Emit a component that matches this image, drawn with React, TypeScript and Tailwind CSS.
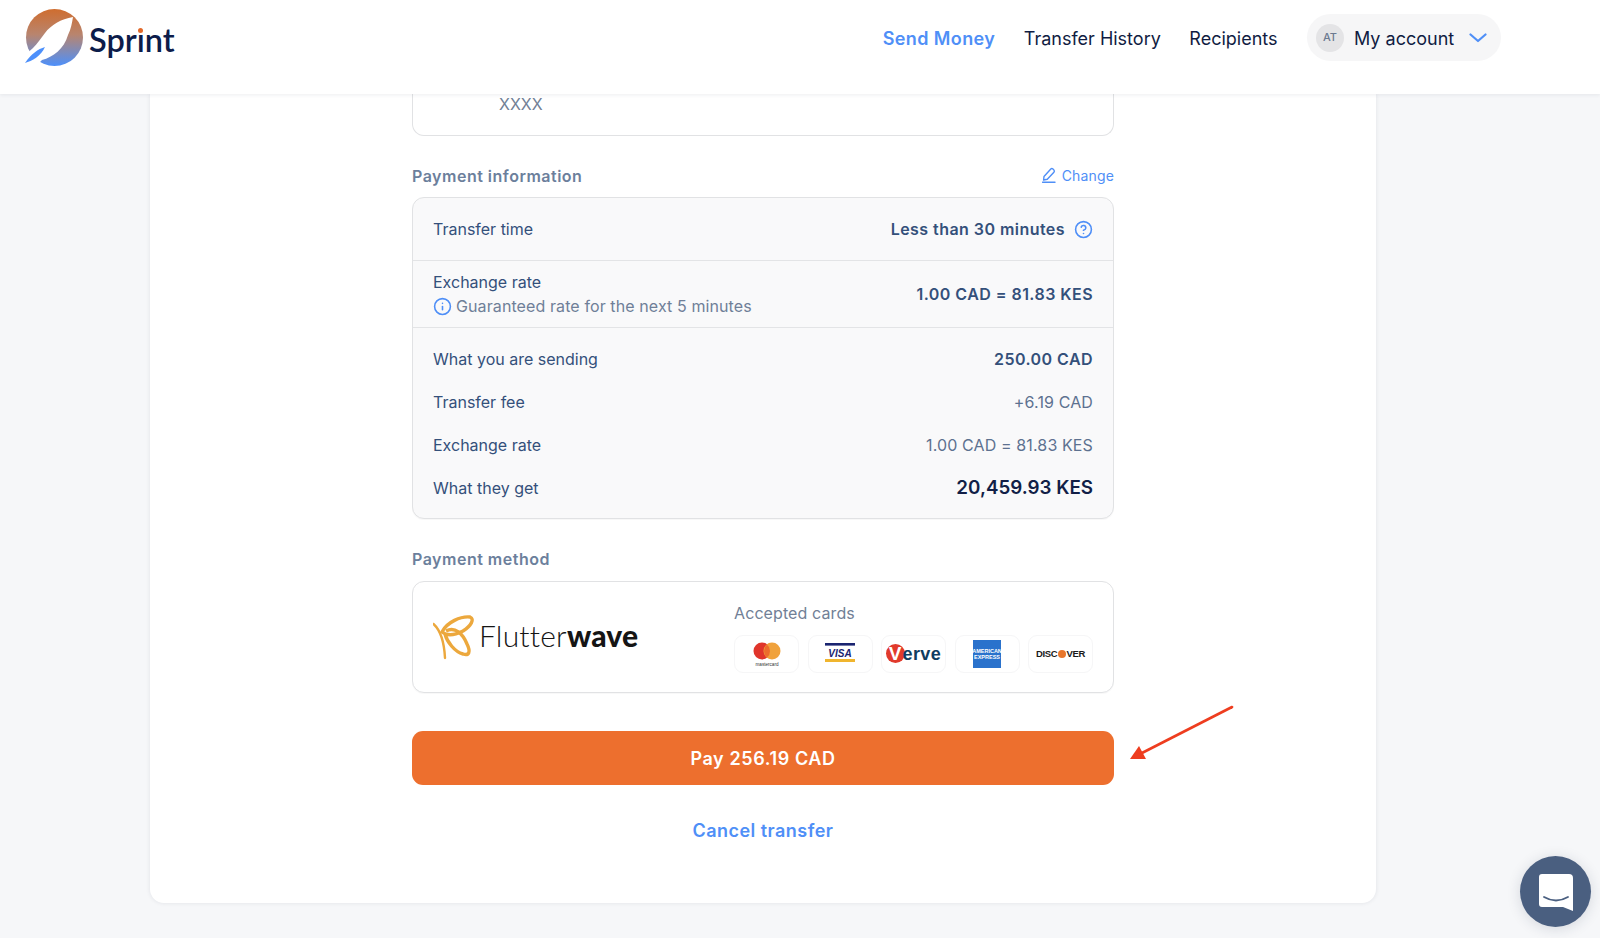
import React from 'react';
import { CircleHelp, Info } from 'lucide-react';

function SprintLogo() {
  return (
    <div className="relative flex items-center">
      <svg width="64" height="64" viewBox="0 0 64 64" className="shrink-0">
        <defs>
          <linearGradient id="sprintFill" x1="0" y1="0" x2="0" y2="1">
            <stop offset="0" stopColor="#cf6d2f" />
            <stop offset="0.45" stopColor="#b8856f" />
            <stop offset="1" stopColor="#4d90fb" />
          </linearGradient>
        </defs>
        <circle cx="31.5" cy="30.5" r="28.5" fill="url(#sprintFill)" />
        <path d="M50 10 C38 12 28 18 22 26 C18 31 14 37 10 41 L0 50 L10 62 L19 53 C30 50 41 42 45 28 C48 22 49 16 50 10 Z" fill="#ffffff" />
        <path d="M22 40 C15 42 8 47 2 56 C9 54 18 49 22 40 Z" fill="#4d90fb" />
      </svg>
      <span className="ml-[2px] mt-[2px] font-['Lato',sans-serif] text-[32.5px] font-semibold leading-none text-[#0c1c4a]">
        Spr<span className="relative">ı<span className="absolute left-[1.5px] top-[8px] h-[5px] w-[5px] rounded-full bg-[#e2692a]" /></span>nt
      </span>
    </div>
  );
}

function Header() {
  return (
    <header className="relative z-10 flex h-[94px] items-start justify-between bg-white pl-[23px] pr-[99px] shadow-[0_1px_4px_rgba(30,40,70,0.08)]">
      <div className="pt-[7px]">
        <SprintLogo />
      </div>
      <nav className="flex items-center gap-[28.5px] pt-[14px] text-[18px] text-[#101c42]">
        <a className="mt-[1px] font-semibold tracking-[0.4px] text-[#4f8ff7]">Send Money</a>
        <a className="mt-[1px]">Transfer History</a>
        <a className="mr-[1px] mt-[1px]">Recipients</a>
        <div className="flex h-[47px] w-[194px] items-center rounded-full bg-[#f6f6f7] pl-[9px]">
          <div className="flex h-[28px] w-[28px] items-center justify-center rounded-full bg-[#e4e4e6] text-[11px] font-medium text-[#6c7a90]">
            AT
          </div>
          <span className="ml-[10px] pt-[1px]">My account</span>
          <svg width="18" height="10" viewBox="0 0 18 10" fill="none" stroke="#4f8ff7" strokeWidth="2.2" strokeLinecap="round" strokeLinejoin="round" className="ml-[15px]">
            <path d="M1.5 1.5 L9 8 L16.5 1.5" />
          </svg>
        </div>
      </nav>
    </header>
  );
}

function SummaryRow({ label, value, big, bold }: { label: string; value: string; big?: boolean; bold?: boolean }) {
  return (
    <div className="flex h-[42.8px] items-center justify-between">
      <span>{label}</span>
      <span
        className={
          big
            ? 'text-[18.8px] font-semibold text-[#121f47]'
            : bold
              ? 'font-semibold tracking-[0.45px]'
              : 'tracking-[0.12px] text-[#5d7190]'
        }
      >
        {value}
      </span>
    </div>
  );
}

function PaymentInfo() {
  return (
    <div className="overflow-hidden rounded-[12px] border border-[#e1e2e4] bg-[#f9f9fa] text-[16px] text-[#34507a] shadow-[0_1px_1px_rgba(0,0,0,0.03)]">
      <div className="flex h-[63px] items-center justify-between border-b border-[#e3e4e6] px-[20px]">
        <span>Transfer time</span>
        <span className="flex items-center font-semibold tracking-[0.45px]">
          Less than 30 minutes
          <CircleHelp className="ml-[9px] h-[19px] w-[19px] text-[#4f8ff7]" strokeWidth={2} />
        </span>
      </div>
      <div className="flex h-[67px] items-center justify-between border-b border-[#e3e4e6] px-[20px]">
        <div className="leading-[24px]">
          <div>Exchange rate</div>
          <div className="flex items-center tracking-[0.1px] text-[#6f7f98]">
            <Info className="mr-[4px] h-[19px] w-[19px] text-[#4f8ff7]" strokeWidth={2} />
            Guaranteed rate for the next 5 minutes
          </div>
        </div>
        <span className="font-semibold tracking-[0.45px]">1.00 CAD = 81.83 KES</span>
      </div>
      <div className="px-[20px] pb-[9px] pt-[10px]">
        <SummaryRow label="What you are sending" value="250.00 CAD" bold />
        <SummaryRow label="Transfer fee" value="+6.19 CAD" />
        <SummaryRow label="Exchange rate" value="1.00 CAD = 81.83 KES" />
        <SummaryRow label="What they get" value="20,459.93 KES" big />
      </div>
    </div>
  );
}

function FlutterwaveLogo() {
  return (
    <div className="flex items-center">
      <svg width="42" height="46" viewBox="0 0 42 46" className="shrink-0" fill="none" stroke="#eca83d" strokeWidth="3.4">
        <path d="M0.5 10 C6 15 11 24 12 44" strokeWidth="2.4" strokeLinecap="round" />
        <path d="M9 18 C14 8 28 2 37 3 C42 5 38 12 30 17 C22 21 14 22 9 18 Z" />
        <path d="M13 17 C22 12 30 20 34 30 C38 38 36 42 30 40 C22 38 14 28 12 20" />
      </svg>
      <span className="-mt-[4px] ml-[4px] font-['Lato',sans-serif] text-[30px] leading-none tracking-[0.2px] text-[#151515]">
        <span className="font-light">Flutter</span>
        <span className="font-black">wave</span>
      </span>
    </div>
  );
}

function CardChip({ children }: { children: React.ReactNode }) {
  return (
    <div className="flex h-[38px] w-[65px] items-center justify-center overflow-hidden rounded-[9px] border border-[#f6f6f7] bg-white">
      {children}
    </div>
  );
}

function Mastercard() {
  return (
    <svg width="40" height="30" viewBox="0 0 40 30">
      <circle cx="15" cy="12" r="8.5" fill="#e0352b" />
      <circle cx="25" cy="12" r="8.5" fill="#f0a23c" />
      <path d="M20 5.5 a8.5 8.5 0 0 1 0 13 a8.5 8.5 0 0 1 0 -13 Z" fill="#ec6c2c" />
      <text x="20" y="27" textAnchor="middle" fontSize="4.6" fontFamily="Liberation Sans, sans-serif" fill="#333333">mastercard</text>
    </svg>
  );
}

function Visa() {
  return (
    <svg width="32" height="22" viewBox="0 0 32 22">
      <rect x="1" y="0" width="30" height="2.6" fill="#1a2470" />
      <text x="16" y="13.5" textAnchor="middle" fontSize="10" fontWeight="900" fontStyle="italic" fontFamily="Liberation Sans, sans-serif" fill="#1a2470">VISA</text>
      <rect x="1" y="16" width="30" height="3" fill="#f0b52e" />
    </svg>
  );
}

function Verve() {
  return (
    <div className="relative flex w-[56px] items-center">
      <div className="flex h-[19px] w-[19px] items-center justify-center rounded-full bg-[#e13a2c] font-['Liberation_Sans',sans-serif] text-[19px] font-bold leading-none text-white">
        V
      </div>
      <span className="-ml-[2px] font-['Liberation_Sans',sans-serif] text-[18px] font-bold leading-none tracking-[0.4px] text-[#0f3c60]">
        erve
      </span>
    </div>
  );
}

function Amex() {
  return (
    <div className="flex h-[28px] w-[28px] flex-col items-center justify-center bg-[#2a72cc] font-['Liberation_Sans',sans-serif] text-[5.5px] font-bold leading-[6px] text-white">
      <span>AMERICAN</span>
      <span>EXPRESS</span>
    </div>
  );
}

function Discover() {
  return (
    <div className="flex items-center font-['Liberation_Sans',sans-serif] text-[9.5px] font-bold leading-none tracking-[-0.3px] text-[#1a1a1a]">
      DISC
      <span className="mx-[0.5px] h-[8px] w-[8px] rounded-full bg-[#e8762b]" />
      VER
    </div>
  );
}

function PaymentMethod() {
  return (
    <div className="flex h-[112px] items-center justify-between rounded-[12px] border border-[#e1e2e4] bg-white px-[20px] shadow-[0_1px_1px_rgba(0,0,0,0.03)]">
      <FlutterwaveLogo />
      <div className="pb-[1px]">
        <div className="text-[16px] leading-[24px] tracking-[0.1px] text-[#718096]">Accepted cards</div>
        <div className="mt-[10px] flex gap-[8.5px]">
          <CardChip><Mastercard /></CardChip>
          <CardChip><Visa /></CardChip>
          <CardChip><Verve /></CardChip>
          <CardChip><Amex /></CardChip>
          <CardChip><Discover /></CardChip>
        </div>
      </div>
    </div>
  );
}

function ChatBubble() {
  return (
    <div className="absolute bottom-[11px] left-[1520px] flex h-[71px] w-[71px] items-center justify-center rounded-full bg-[#4a5f80] shadow-[0_2px_14px_rgba(30,40,70,0.15)]">
      <svg width="36" height="40" viewBox="0 0 36 40">
        <path d="M4 2 H31 Q35 2 35 6 V39 L25 35 H4 Q1 35 1 32 V5 Q1 2 4 2 Z" fill="#ffffff" />
        <path d="M6 25 Q18 32 30 25" stroke="#4a5f80" strokeWidth="1.8" fill="none" strokeLinecap="round" />
      </svg>
    </div>
  );
}

export default function App() {
  return (
    <div className="relative h-[938px] w-[1600px] overflow-hidden bg-[#f6f7f9] font-['Inter',sans-serif]">
      <Header />
      <main className="ml-[150px] h-[809px] w-[1226px] rounded-b-[14px] bg-white pl-[262px] shadow-[0_0_4px_rgba(30,40,70,0.1)]">
        <div className="w-[702px]">
          <div className="h-[42px] rounded-b-[12px] border border-t-0 border-[#e1e2e4] pl-[86px] text-[16px] leading-[20px] text-[#718096]">
            XXXX
          </div>

          <div className="mb-[9px] mt-[28px] flex h-[24px] items-center justify-between">
            <span className="text-[16px] font-semibold tracking-[0.5px] text-[#6c7f9c]">Payment information</span>
            <a className="-mt-[2px] flex items-center text-[14px] tracking-[0.15px] text-[#4f8ff7]">
              <svg width="14" height="16" viewBox="0 0 14 16" fill="none" stroke="currentColor" strokeWidth="1.4" className="mr-[6px]" strokeLinejoin="round">
                <path d="M2 9.5 L8.8 2 Q9.8 1 11 2 L12 3.1 Q12.8 4.2 11.9 5.2 L5.3 12.3 L1.6 13 Z" />
                <path d="M0.5 15.2 H13" strokeLinecap="round" />
              </svg>
              Change
            </a>
          </div>
          <PaymentInfo />

          <div className="mb-[10px] mt-[28px] h-[24px] text-[16px] font-semibold leading-[24px] tracking-[0.5px] text-[#6c7f9c]">
            Payment method
          </div>
          <PaymentMethod />

          <button className="mt-[38px] h-[54px] w-full rounded-[11px] bg-[#ed6f2e] text-[18px] font-semibold tracking-[0.6px] text-white">
            Pay 256.19 CAD
          </button>
          <div className="mt-[34px] text-center text-[18px] font-semibold leading-[24px] tracking-[0.47px] text-[#4f8ff7]">
            Cancel transfer
          </div>
        </div>
      </main>

      {/* annotation arrow on top of the screenshot */}
      <svg className="absolute left-[1120px] top-[700px]" width="120" height="70" viewBox="0 0 120 70" fill="none">
        <path d="M112 7 L20 54" stroke="#ee3d1f" strokeWidth="2.6" strokeLinecap="round" />
        <path d="M10 59 L19 46 L26 59 Z" fill="#ee3d1f" />
      </svg>

      <ChatBubble />
    </div>
  );
}
